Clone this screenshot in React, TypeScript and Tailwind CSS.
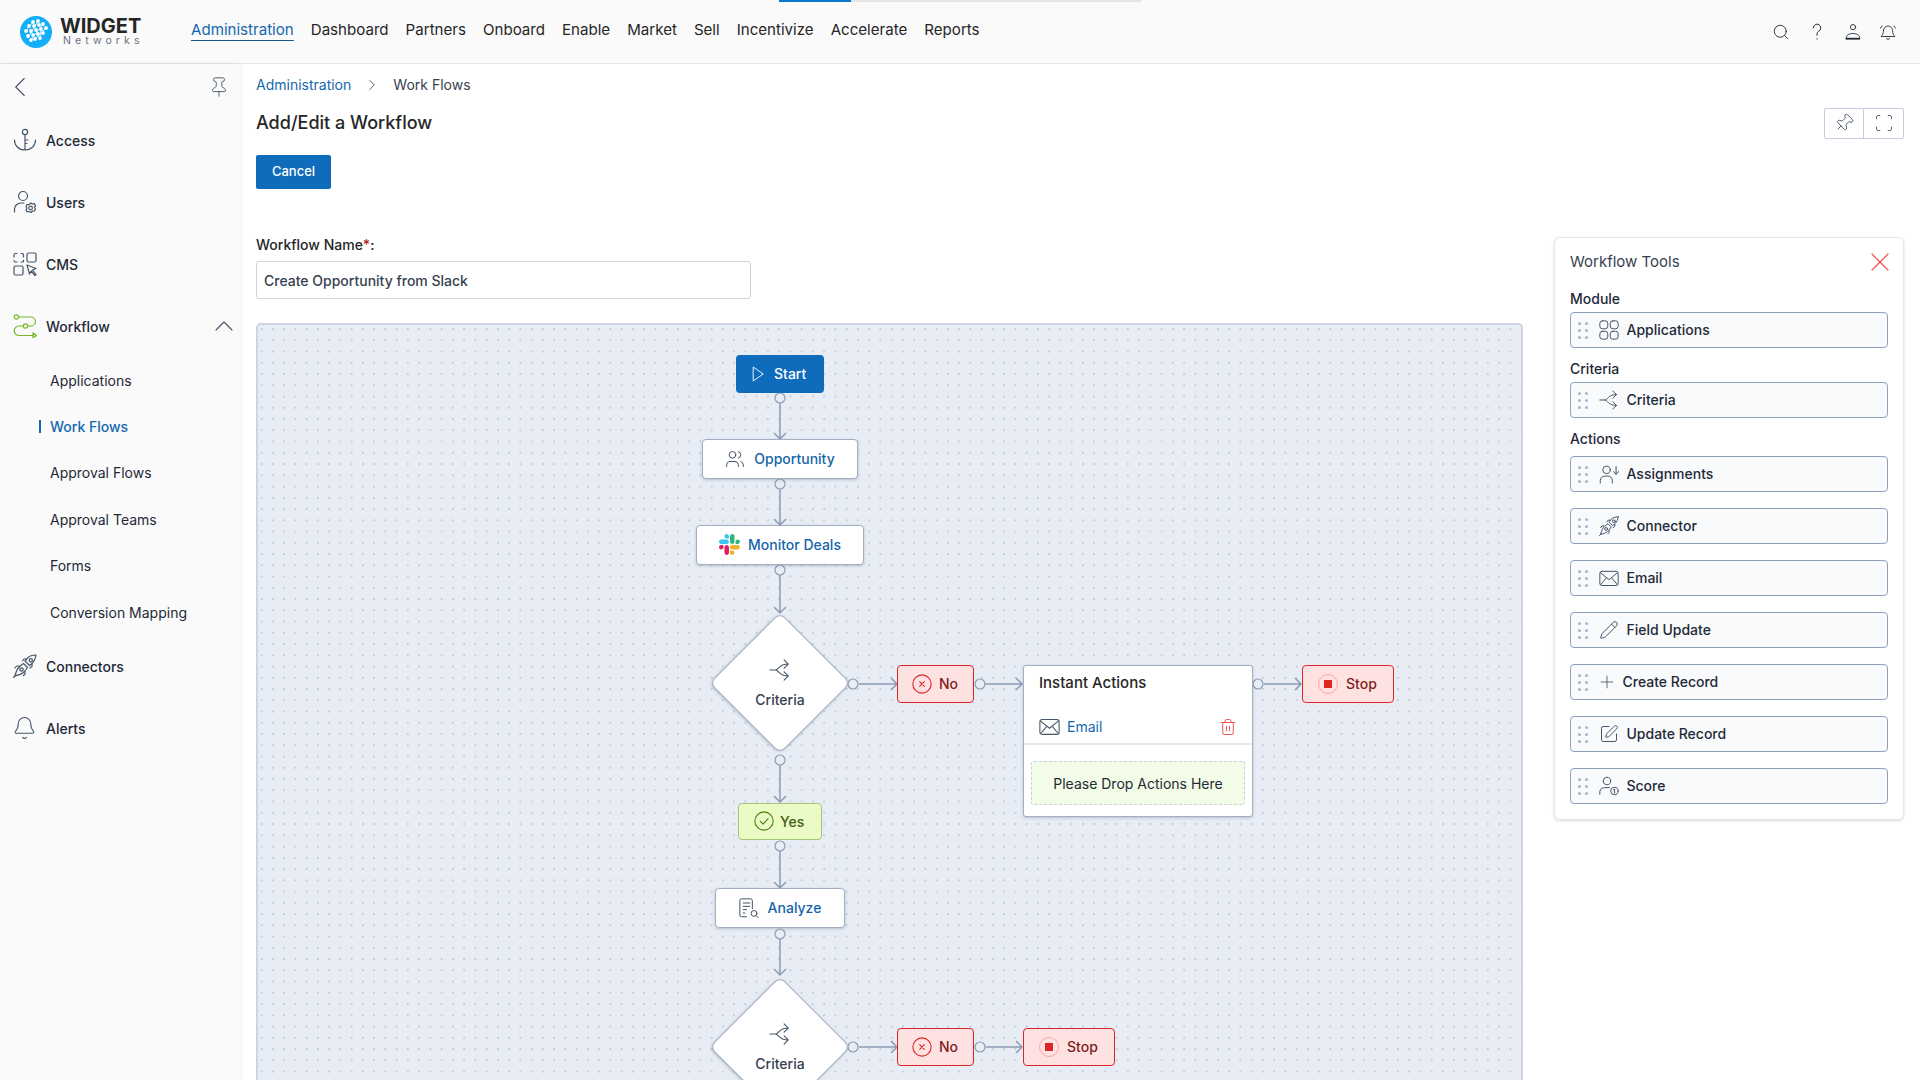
import { Bell, ChevronLeft, ChevronRight, ChevronUp, Pencil, Pin, Plus, Scan, Search, SquarePen, Trash2, Users as UsersIcon, X } from 'lucide-react';
import type { ReactNode } from 'react';

const navItems = ['Dashboard', 'Partners', 'Onboard', 'Enable', 'Market', 'Sell', 'Incentivize', 'Accelerate', 'Reports'];
const subItems = ['Applications', 'Work Flows', 'Approval Flows', 'Approval Teams', 'Forms', 'Conversion Mapping'];

function Icon({ size = 24, className = '', children }: { size?: number; className?: string; children: ReactNode }) {
  return (
    <svg width={size} height={size} viewBox="0 0 24 24" fill="none" stroke="currentColor" strokeWidth="1.2" strokeLinecap="round" strokeLinejoin="round" className={`shrink-0 ${className}`}>
      {children}
    </svg>
  );
}

function Logo() {
  const dots = [
    [13, 6], [18, 5], [9, 10], [14, 10], [19, 9], [23, 8], [6, 15], [11, 15], [16, 14], [21, 13], [26, 12],
    [8, 20], [13, 19], [18, 18], [23, 17], [11, 24], [15, 23], [20, 22],
  ];
  return (
    <svg width="32" height="32" viewBox="0 0 32 32" className="shrink-0">
      <circle cx="16" cy="16" r="16" fill="#12aef6" />
      <path d="M6 15 13 6M9 20 18 5M11 24 23 8M15 23 26 12M20 22 21 13" stroke="#fff" strokeWidth="1" opacity=".8" />
      {dots.map(([x, y]) => (
        <circle key={`${x}-${y}`} cx={x} cy={y} r="1.9" fill="#fff" />
      ))}
    </svg>
  );
}

const AccessIcon = () => (
  <Icon size={24}>
    <circle cx="12" cy="4" r="2.6" />
    <path d="M12 6.6V22M12 12h3M12 15.5h2M1.5 12c0 6 4.5 10 10.500 10s10.500-4 10.500-10" />
  </Icon>
);
const UsersGearIcon = () => (
  <Icon size={24}>
    <circle cx="10" cy="6" r="4.500" />
    <path d="M1.500 22v-3c0-3.500 3-6 6.500-6h3" />
    <path d="M18 13l1.500 1 2-.3 1 2-1 1.500 1 2-1 1.800-2 0-1.500 1.500-2-1-2 .2-1-1.800 1-1.700-1-1.700 1-2 2 .2z" />
    <circle cx="17.600" cy="18" r="1.800" />
  </Icon>
);
const CmsIcon = () => (
  <Icon size={24}>
    <path d="M1 5V3a1.500 1.500 0 0 1 1.500-1.500H4M8 1.500h1.500A1.500 1.500 0 0 1 10.500 3v2M10.500 8v1a1 1 0 0 1-1 1H8M4 10H2.500A1.500 1.500 0 0 1 1 8.500" />
    <rect x="14" y="1" width="9" height="9" rx="1.500" />
    <rect x="1" y="14" width="9" height="9" rx="1.500" />
    <path d="M14 13l9 3.500-3.500 1.500 3.500 4.500-1 1-3.800-4.500L16.500 22z" />
  </Icon>
);
const WorkflowIcon = () => (
  <Icon size={24} className="text-[#78b82a]">
    <circle cx="3.500" cy="3" r="2.200" />
    <path d="M5.700 3H18a4 4 0 0 1 0 9h-3" />
    <circle cx="12.500" cy="12" r="2.200" />
    <path d="M10.300 12H6a4.500 4.500 0 0 0 0 9.500h14" />
    <path d="M20 18.800l3.500 2.700-3.500 2.500z" />
  </Icon>
);
const RocketsIcon = ({ size = 24 }: { size?: number }) => (
  <Icon size={size}>
    <path d="M23 1c-3.500 0-6.500 1-8.500 3l-2.500 3 4.500 4.500 3-2.500c2-2 3-4.500 3.500-8z" />
    <circle cx="17.800" cy="6.200" r="1.600" />
    <path d="M13.500 5H11L9.500 7M19 10v2.500L17 14" />
    <path d="M10.500 9.500 6.500 12.500c-2 2-3.500 5-4.500 9.500 4.500-1 7.500-2.500 9.500-4.500l3-4z" />
    <circle cx="8.500" cy="15.500" r="1.700" />
    <path d="M6 12H3.500L2 14M12 17.500V20l-1.500 1.500M.5 23.500 3 21" />
  </Icon>
);
const SplitIcon = ({ size = 22, className = '' }: { size?: number; className?: string }) => (
  <Icon size={size} className={className}>
    <path d="M1 12h6c4 0 3-6.500 14-6.500M7 12c4 0 3 6.500 14 6.500M16.500 1l4.500 4.500L16.500 10M16.500 14l4.500 4.500-4.500 4.500" />
  </Icon>
);
const AppsIcon = () => (
  <Icon size={20}>
    <rect x="1" y="1" width="9.500" height="9.500" rx="3" />
    <rect x="13.500" y="1" width="9.500" height="9.500" rx="3" />
    <rect x="1" y="13.500" width="9.500" height="9.500" rx="3" />
    <rect x="13.500" y="13.500" width="9.500" height="9.500" rx="3" />
  </Icon>
);
const AssignIcon = () => (
  <Icon size={20}>
    <circle cx="9" cy="7" r="4.500" />
    <path d="M1.500 23v-3c0-3.500 3-5.500 6-5.500h3c3 0 5.500 2 5.500 5.500v3M20.500 3v9M17.500 9l3 3.500 3-3.500" />
  </Icon>
);
const MailIcon = ({ size = 20 }: { size?: number }) => (
  <Icon size={size}>
    <rect x="1" y="4" width="22" height="17" rx="2.500" />
    <path d="M1.500 5.500 12 14 22.500 5.500M2 20l7-8.500M22 20l-7-8.500" />
  </Icon>
);
const ScoreIcon = () => (
  <Icon size={20}>
    <circle cx="9.500" cy="6" r="4.500" />
    <path d="M1 22v-3c0-3 2.500-5 5.500-5h6" />
    <circle cx="18.500" cy="18" r="4.500" />
    <path d="M17.500 16.500l1.200-.7V20.500" />
  </Icon>
);
const AnalyzeIcon = () => (
  <Icon size={20} className="text-[#475569]">
    <path d="M9 22.500H3a2 2 0 0 1-2-2V3a2 2 0 0 1 2-2h11a2 2 0 0 1 2 2v10" />
    <path d="M5 6h8M5 10h8M5 14h4M5 18h2" />
    <circle cx="18" cy="18.500" r="3.500" />
    <path d="M20.500 21l2.500 2.500" />
  </Icon>
);
const PersonIcon = () => (
  <Icon size={18} className="text-[#1f2937]">
    <circle cx="12" cy="5.500" r="3.500" />
    <path d="M3 20c0-4 4-6 9-6s9 2 9 6z" />
    <path d="M3 20.500h18v1H3z" fill="currentColor" />
  </Icon>
);

function Grip() {
  return (
    <div className="grid w-[10px] shrink-0 grid-cols-[3px_3px] gap-x-[4px] gap-y-[4px]">
      {[0, 1, 2, 3, 4, 5].map((i) => (
        <span key={i} className="h-[3px] w-[3px] rounded-full bg-[#a5b4cb]" />
      ))}
    </div>
  );
}

function Tool({ icon, label }: { icon: ReactNode; label: string }) {
  return (
    <div className="flex h-[36px] items-center rounded-[4px] border border-[#8fa1bf] bg-[#f8fafc] pl-[7px]">
      <Grip />
      <span className="ml-[11px] flex text-[#475569]">{icon}</span>
      <span className="mb-[1px] ml-[7.500px] text-[14px] font-medium text-[#1f2937]">{label}</span>
    </div>
  );
}

function SideItem({ icon, label, chevron }: { icon: ReactNode; label: string; chevron?: boolean }) {
  return (
    <div className="flex h-[62px] items-center pl-[13px]">
      <span className="flex w-[24px] text-[#475569]">{icon}</span>
      <span className="ml-[9px] text-[14px] font-medium text-[#1f2937]">{label}</span>
      {chevron && <ChevronUp size={32} strokeWidth={0.8} className="ml-auto text-[#475569]" />}
    </div>
  );
}

function FlowNode({ className, children }: { className: string; children: ReactNode }) {
  return (
    <div className={`absolute flex items-center justify-center rounded-[4px] border border-[#a3b0c4] bg-white pb-[1px] text-[14px] font-medium text-[#1565a8] shadow-[0_1px_3px_rgba(71,85,105,0.3)] ${className}`}>
      {children}
    </div>
  );
}

function NoNode({ className }: { className: string }) {
  return (
    <div className={`absolute flex h-[38px] w-[77px] items-center gap-[6px] rounded-[4px] border border-[#dc2626] bg-[#fee2e2] pb-[1px] pl-[13px] text-[14px] font-medium text-[#7f1d1d] ${className}`}>
      <Icon size={22} className="text-[#dc2626]">
        <circle cx="12" cy="12" r="10" />
        <path d="M9.500 9.500l5 5M14.500 9.500l-5 5" />
      </Icon>
      No
    </div>
  );
}

function StopNode({ className }: { className: string }) {
  return (
    <div className={`absolute flex h-[38px] w-[92px] items-center gap-[8px] rounded-[4px] border border-[#dc2626] bg-[#fee2e2] pb-[1px] pl-[15px] text-[14px] font-medium text-[#7f1d1d] ${className}`}>
      <span className="flex h-[20px] w-[20px] items-center justify-center rounded-full border border-[#fca5a5]">
        <span className="h-[8px] w-[8px] bg-[#dc2626]" />
      </span>
      Stop
    </div>
  );
}

function Diamond({ className }: { className: string }) {
  return (
    <div className={`absolute h-[136px] w-[136px] ${className}`}>
      <div className="absolute left-[18px] top-[18px] h-[100px] w-[100px] rotate-45 rounded-[7px] border border-[#a3b0c4] bg-white shadow-[0_1px_3px_rgba(71,85,105,0.3)]" />
      <div className="relative flex h-full flex-col items-center pt-[44px]">
        <SplitIcon size={22} className="text-[#475569]" />
        <span className="mt-[8px] text-[14px] font-medium text-[#374151]">Criteria</span>
      </div>
    </div>
  );
}

function Edges() {
  const vertical: [number, number][] = [[78, 114], [164, 200], [250, 288], [440, 477], [526, 563], [614, 650]];
  const horizontal: [number, number, number][] = [[601, 639, 359], [727, 764, 359], [1006, 1043, 359], [601, 639, 722], [728, 764, 722]];
  const circles: [number, number][] = [[522, 73], [522, 159], [522, 245], [595, 359], [722, 359], [1000, 359], [522, 435], [522, 521], [522, 609], [595, 722], [722, 722]];
  return (
    <svg className="absolute left-0 top-0" width="1263" height="760" fill="none" stroke="#8c9cb3">
      {vertical.map(([a, b]) => (
        <path key={a} strokeWidth="1.500" d={`M522 ${a}V${b}M516 ${b - 6}l6 6 6-6`} />
      ))}
      {horizontal.map(([a, b, y]) => (
        <path key={`${a}-${y}`} strokeWidth="1.500" d={`M${a} ${y}H${b}M${b - 6} ${y - 6}l6 6-6 6`} />
      ))}
      {circles.map(([x, y]) => (
        <circle key={`${x}-${y}`} cx={x} cy={y} r="5" fill="#e8edf5" strokeWidth="1.200" />
      ))}
    </svg>
  );
}

function SlackLogo() {
  return (
    <svg width="21" height="21" viewBox="0 0 123 123" className="shrink-0">
      <path d="M25.800 77.600c0 7.100-5.800 12.900-12.900 12.900S0 84.700 0 77.600s5.800-12.900 12.900-12.900h12.900v12.900z" fill="#E01E5A" />
      <path d="M32.300 77.600c0-7.100 5.800-12.900 12.900-12.900s12.900 5.800 12.900 12.900v32.300c0 7.100-5.800 12.900-12.900 12.900s-12.900-5.800-12.900-12.900V77.600z" fill="#E01E5A" />
      <path d="M45.200 25.800c-7.100 0-12.900-5.800-12.900-12.900S38.100 0 45.200 0s12.900 5.800 12.900 12.900v12.900H45.200z" fill="#36C5F0" />
      <path d="M45.200 32.300c7.100 0 12.900 5.800 12.900 12.900s-5.800 12.900-12.900 12.900H12.900C5.800 58.100 0 52.300 0 45.200s5.800-12.900 12.900-12.900h32.300z" fill="#36C5F0" />
      <path d="M97 45.200c0-7.100 5.800-12.900 12.900-12.900s12.900 5.800 12.900 12.900-5.800 12.900-12.900 12.900H97V45.200z" fill="#2EB67D" />
      <path d="M90.500 45.200c0 7.100-5.800 12.900-12.900 12.900s-12.900-5.800-12.900-12.900V12.900C64.700 5.800 70.500 0 77.600 0s12.900 5.800 12.900 12.900v32.300z" fill="#2EB67D" />
      <path d="M77.600 97c7.100 0 12.900 5.800 12.900 12.900s-5.800 12.900-12.900 12.900-12.900-5.800-12.900-12.900V97h12.900z" fill="#ECB22E" />
      <path d="M77.600 90.500c-7.100 0-12.900-5.800-12.900-12.900s5.800-12.900 12.900-12.900h32.300c7.100 0 12.900 5.800 12.900 12.900s-5.800 12.900-12.900 12.900H77.600z" fill="#ECB22E" />
    </svg>
  );
}

export default function App() {
  return (
    <div className="relative flex h-screen flex-col overflow-hidden bg-white font-['Inter',sans-serif] text-[#1f2937]">
      {/* Loading bar */}
      <div className="absolute left-[779px] top-0 h-[2px] w-[362px] bg-[#e5e5e5]">
        <div className="h-full w-[72px] bg-[#0b78d0]" />
      </div>

      {/* Top bar */}
      <header className="flex h-[64px] shrink-0 items-center border-b border-[#e2e8f0] bg-[#fafafa] pl-[20px]">
        <Logo />
        <div className="ml-[8px] w-[131px]">
          <div className="text-[20px] font-bold leading-[18px] text-[#262626]">WIDGET</div>
          <div className="ml-[3px] text-[10.500px] leading-[12px] tracking-[4.100px] text-[#6b7280]">Networks</div>
        </div>
        <nav className="flex gap-[17px] pb-[3px] text-[15.100px] leading-[20px] text-[#262626]">
          <a className="border-b border-[#0e5a8a] text-[#1469ae]">Administration</a>
          {navItems.map((item) => (
            <a key={item} className="border-b border-transparent">{item}</a>
          ))}
        </nav>
        <div className="ml-auto flex items-center gap-[17px] pr-[23px] text-[#1f2937]">
          <Search size={18} strokeWidth={1.2} />
          <Icon size={20}>
            <path d="M7.500 7a4.500 4.500 0 1 1 6.800 3.900c-1.400 1-2.300 2-2.300 3.600v1.500M12 20v.5" />
          </Icon>
          <PersonIcon />
          <Icon size={18}>
            <path d="M6 10a6 6 0 0 1 12 0c0 5 2 6 3 8H3c1-2 3-3 3-8zM10 21a2.500 2.500 0 0 0 4 0M4 4 2 7M20 4l2 3" />
          </Icon>
        </div>
      </header>

      <div className="flex min-h-0 flex-1">
        {/* Sidebar */}
        <aside className="relative z-10 w-[240px] shrink-0 bg-[#fafafa] shadow-[1px_0_4px_rgba(15,23,42,0.07)]">
          <div className="flex h-[45px] items-center justify-between pl-[3px] pr-[10px] text-[#475569]">
            <ChevronLeft size={34} strokeWidth={0.8} />
            <Pin size={22} strokeWidth={1} />
          </div>
          <SideItem icon={<AccessIcon />} label="Access" />
          <SideItem icon={<UsersGearIcon />} label="Users" />
          <SideItem icon={<CmsIcon />} label="CMS" />
          <SideItem icon={<WorkflowIcon />} label="Workflow" chevron />
          {subItems.map((item) => {
            const active = item === 'Work Flows';
            return (
              <div key={item} className="relative flex h-[46.400px] items-center pl-[50px] text-[14px] text-[#1f2937]">
                {active && <span className="absolute left-[39px] h-[13px] w-[2px] bg-[#1469ae]" />}
                <span className={active ? 'font-medium text-[#1469ae]' : ''}>{item}</span>
              </div>
            );
          })}
          <SideItem icon={<RocketsIcon />} label="Connectors" />
          <SideItem icon={<Bell size={26} strokeWidth={1} className="-ml-[1px]" />} label="Alerts" />
        </aside>

        {/* Main */}
        <main className="flex min-w-0 flex-1 flex-col px-[16px]">
          <div className="flex h-[42px] items-center pb-[1px] text-[14px]">
            <a className="text-[#1469ae]">Administration</a>
            <ChevronRight size={18} strokeWidth={1.1} className="mx-[12px] text-[#374151]" />
            <span className="text-[#374151]">Work Flows</span>
          </div>
          <div className="flex h-[34px] items-center justify-between">
            <h1 className="pb-[1px] text-[18px] font-medium text-[#262626]">Add/Edit a Workflow</h1>
            <div className="flex h-[31px] rounded-[2px] border border-[#c3cfde] text-[#475569]">
              <span className="flex w-[39px] items-center justify-center border-r border-[#c3cfde]">
                <Pin size={20} strokeWidth={1.1} className="rotate-45" />
              </span>
              <span className="flex w-[39px] items-center justify-center">
                <Scan size={20} strokeWidth={1.1} />
              </span>
            </div>
          </div>
          <button className="mt-[15px] h-[34px] w-[75px] rounded-[2px] bg-[#0f6cbd] text-[13px] font-medium text-white">Cancel</button>

          <div className="mt-[48px] flex min-h-0 flex-1 gap-[31px]">
            <div className="flex w-[1267px] shrink-0 flex-col">
              <label className="text-[14px] font-medium leading-[16px] text-[#262626]">
                Workflow Name<span className="text-[#b91c1c]">*</span>:
              </label>
              <div className="mt-[8px] flex h-[38px] w-[495px] items-center rounded-[3px] border border-[#cbd5e1] px-[7px] text-[14px] font-medium text-[#374151]">
                Create Opportunity from Slack
              </div>

              {/* Diagram canvas */}
              <div className="relative mt-[24px] min-h-0 flex-1 overflow-hidden rounded-t-[5px] border-2 border-b-0 border-[#ccd5e1] bg-[#e8edf5] bg-[radial-gradient(#c3ccda_0.9px,transparent_1.200px)] bg-[size:11.250px_11.250px] bg-[position:-2px_-1.600px]">
                <Edges />
                <div className="absolute left-[478px] top-[30px] flex h-[38px] w-[88px] items-center gap-[7px] rounded-[4px] bg-[#0f6cbd] pb-[1px] pl-[13px] text-[14px] font-medium text-white">
                  <Icon size={18}><path d="M6 3l13 9-13 9z" /></Icon>
                  Start
                </div>
                <FlowNode className="left-[444px] top-[114px] h-[40px] w-[156px] gap-[9px]">
                  <UsersIcon size={20} strokeWidth={1.2} className="text-[#475569]" />
                  Opportunity
                </FlowNode>
                <FlowNode className="left-[438px] top-[200px] h-[40px] w-[168px] gap-[8px]">
                  <SlackLogo />
                  Monitor Deals
                </FlowNode>
                <Diamond className="left-[454px] top-[290px]" />
                <NoNode className="left-[639px] top-[340px]" />
                <div className="absolute left-[765px] top-[340px] h-[152px] w-[230px] rounded-[3px] border border-[#a3b0c4] bg-white shadow-[0_1px_3px_rgba(71,85,105,0.3)]">
                  <div className="pl-[15px] pt-[7px] text-[15px] font-medium leading-[20px] text-[#262626]">Instant Actions</div>
                  <div className="mt-[17px] flex h-[35px] items-center border-b-2 border-[#e2e8f0] pl-[15px] pr-[15px]">
                    <span className="text-[#475569]"><MailIcon size={21} /></span>
                    <span className="ml-[7px] text-[14px] text-[#1469ae]">Email</span>
                    <Trash2 size={18} strokeWidth={1.2} className="ml-auto text-[#ef4444]" />
                  </div>
                  <div className="mx-[7px] mt-[16px] flex h-[44px] items-center justify-center rounded-[3px] border border-dashed border-[#c5d0e0] bg-[#f3fce6] text-[14px] text-[#1f2937]">
                    Please Drop Actions Here
                  </div>
                </div>
                <StopNode className="left-[1044px] top-[340px]" />
                <div className="absolute left-[480px] top-[478px] flex h-[37px] w-[84px] items-center gap-[5px] rounded-[4px] border border-[#a3c77a] bg-[#eafbc5] pb-[1px] pl-[14px] text-[14px] font-medium text-[#3f6212]">
                  <Icon size={22} className="text-[#4d7c0f]">
                    <circle cx="12" cy="12" r="10" />
                    <path d="M8 12.500l3 3 5.500-6" />
                  </Icon>
                  Yes
                </div>
                <FlowNode className="left-[457px] top-[563px] h-[40px] w-[130px] gap-[9px]">
                  <AnalyzeIcon />
                  Analyze
                </FlowNode>
                <Diamond className="left-[454px] top-[654px]" />
                <NoNode className="left-[639px] top-[703px]" />
                <StopNode className="left-[765px] top-[703px]" />
              </div>
            </div>

            {/* Tools panel */}
            <section className="h-[583px] w-[350px] shrink-0 rounded-[6px] border border-[#e5e7eb] bg-white px-[15px] shadow-[0_1px_3px_rgba(15,23,42,0.15)]">
              <div className="flex h-[48px] items-center justify-between">
                <span className="text-[15px] text-[#374151]">Workflow Tools</span>
                <X size={32} strokeWidth={0.8} className="-mr-[8px] text-[#ef4444]" />
              </div>
              <div className="mb-[3px] mt-[3px] text-[14px] font-medium leading-[20px] text-[#1f2937]">Module</div>
              <Tool icon={<AppsIcon />} label="Applications" />
              <div className="mb-[3px] mt-[11px] text-[14px] font-medium leading-[20px] text-[#1f2937]">Criteria</div>
              <Tool icon={<SplitIcon size={20} />} label="Criteria" />
              <div className="mb-[7px] mt-[11px] text-[14px] font-medium leading-[20px] text-[#1f2937]">Actions</div>
              <div className="flex flex-col gap-[16px]">
                <Tool icon={<AssignIcon />} label="Assignments" />
                <Tool icon={<RocketsIcon size={20} />} label="Connector" />
                <Tool icon={<MailIcon />} label="Email" />
                <Tool icon={<Pencil size={20} strokeWidth={1.2} />} label="Field Update" />
                <Tool icon={<Plus size={20} strokeWidth={1} className="-mx-[2px]" />} label="Create Record" />
                <Tool icon={<SquarePen size={20} strokeWidth={1.2} />} label="Update Record" />
                <Tool icon={<ScoreIcon />} label="Score" />
              </div>
            </section>
          </div>
        </main>
      </div>
    </div>
  );
}
